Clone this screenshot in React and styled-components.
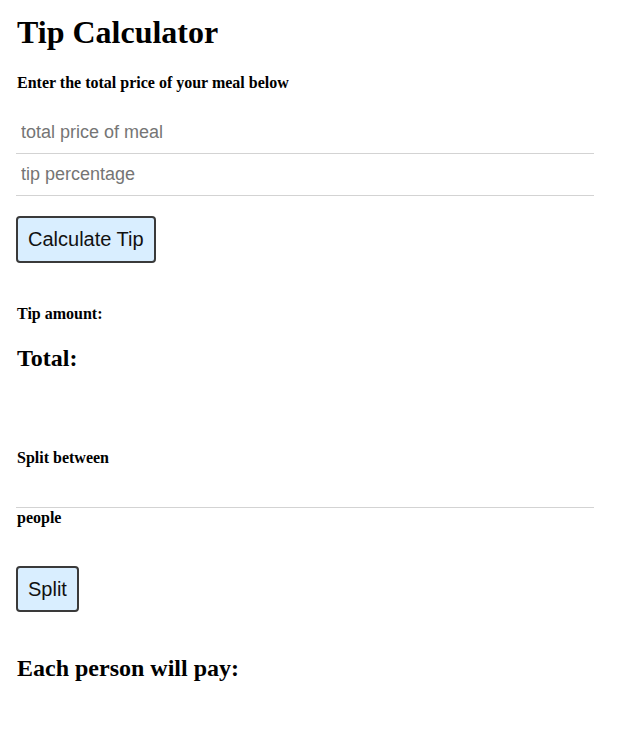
import React, { useState } from 'react'
import styled, { createGlobalStyle } from 'styled-components'

const GlobalStyle = createGlobalStyle`
  body {
    margin: 0;
    background: #fff;
    font-family: "Liberation Serif", "Times New Roman", serif;
    color: #000;
  }
`

const Page = styled.div`
  width: 578px;
  padding: 14px 0 40px 16px;
`

const Title = styled.h1`
  font-size: 32px;
  font-weight: bold;
  margin: 0 0 0 1px;
  line-height: 37px;
`

const Label = styled.h4`
  font-size: 16px;
  font-weight: bold;
  margin: ${p => p.$m || '0'};
  line-height: 18px;
`

const Heading = styled.h2`
  font-size: 24px;
  font-weight: bold;
  margin: ${p => p.$m || '0'};
  line-height: 28px;
`

const Field = styled.input`
  display: block;
  box-sizing: border-box;
  width: 100%;
  height: 42px;
  border: 0;
  border-bottom: 1px solid #d3d3d3;
  padding: 0 5px;
  margin-top: ${p => p.$top || 0}px;
  font-family: "Liberation Sans", Arial, sans-serif;
  font-size: 18px;
  color: #222;
  outline: none;
  &::placeholder {
    color: #757575;
  }
`

const Button = styled.button`
  display: block;
  box-sizing: border-box;
  height: ${p => p.$h || 47}px;
  padding: 0 10px;
  border: 2px solid #3a3a3a;
  border-radius: 4px;
  background: #d9eeff;
  font-family: "Liberation Sans", Arial, sans-serif;
  font-size: 20px;
  color: #111;
  margin: ${p => p.$m || '0'};
`

export default function App() {
  const [price, setPrice] = useState('')
  const [tip, setTip] = useState('')
  const [people, setPeople] = useState('')

  return (
    <Page>
      <GlobalStyle />
      <Title>Tip Calculator</Title>
      <Label $m="23px 0 0 1px">Enter the total price of your meal below</Label>
      <Field
        $top={20}
        placeholder="total price of meal"
        value={price}
        onChange={e => setPrice(e.target.value)}
      />
      <Field
        placeholder="tip percentage"
        value={tip}
        onChange={e => setTip(e.target.value)}
      />
      <Button $m="20px 0 0 0">Calculate Tip</Button>
      <Label $m="42px 0 0 1px">Tip amount:</Label>
      <Heading $m="21px 0 0 1px">Total:</Heading>
      <Label $m="77px 0 0 1px">Split between</Label>
      <Field $top={-1} value={people} onChange={e => setPeople(e.target.value)} />
      <Label $m="1px 0 0 1px">people</Label>
      <Button $h={46} $m="39px 0 0 0">Split</Button>
      <Heading $m="42px 0 0 1px">Each person will pay:</Heading>
    </Page>
  )
}
